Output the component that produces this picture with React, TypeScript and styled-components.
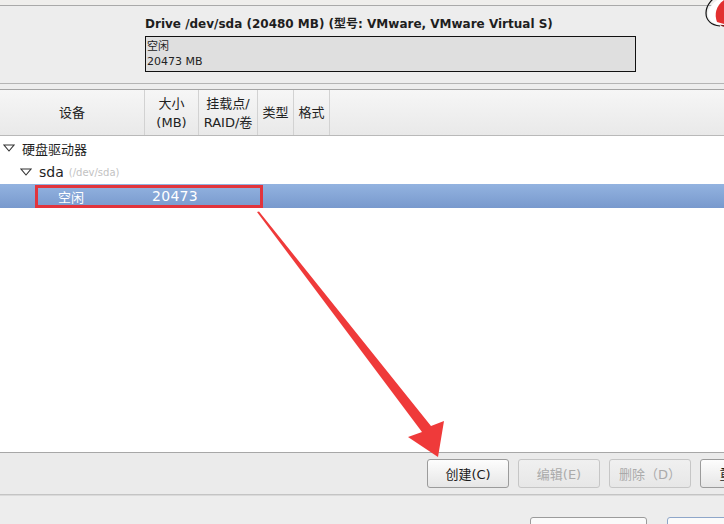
import styled, { createGlobalStyle } from "styled-components";

const Global = createGlobalStyle`
  html, body {
    margin: 0;
    padding: 0;
    background: #ededed;
    overflow: hidden;
  }
  body {
    font-family: "DejaVu Sans", "Noto Sans CJK SC", sans-serif;
    color: #1a1a1a;
  }
`;

/* ── Frame ───────────────────────────────────────────────────── */

const Page = styled.div`
  position: relative;
  width: 724px;
  height: 524px;
  display: flex;
  flex-direction: column;
  background: #ededed;
  overflow: hidden;
`;

const TopStrip = styled.div`
  height: 5px;
  background: #efeeec;
  border-bottom: 1px solid #a9a9a9;
  flex: none;
`;

const DriveSection = styled.section`
  flex: none;
  height: 78px;
  padding: 11px 0 0 145px;
  box-sizing: border-box;
  border-bottom: 1px solid #b4b4b4;
  display: flex;
  flex-direction: column;
  gap: 4px;
`;

const DriveTitle = styled.div`
  font-size: 12px;
  font-weight: 700;
  line-height: 15px;
  color: #1e1e1e;
`;

const DriveBar = styled.div`
  width: 491px;
  height: 36px;
  box-sizing: border-box;
  border: 1px solid #111;
  background: #dfdfdf;
  padding: 2px 1px 0;
  font-size: 11px;
  line-height: 15px;
  color: #222;
`;

const Spacer = styled.div`
  flex: none;
  height: 5px;
  border-bottom: 1px solid #a4a4a4;
`;

/* ── Tree view ───────────────────────────────────────────────── */

const Tree = styled.div`
  position: relative;
  flex: 1;
  min-height: 0;
  background: #fff;
  display: flex;
  flex-direction: column;
`;

const HeaderRow = styled.div`
  display: flex;
  height: 46px;
  box-sizing: border-box;
  flex: none;
  background: linear-gradient(#f6f6f6, #e9e9e9);
  border-bottom: 1px solid #b9b9b9;
`;

const HeaderCell = styled.div<{ $w?: number }>`
  ${(p) => (p.$w ? `width: ${p.$w}px; flex: none;` : "flex: 1;")}
  box-sizing: border-box;
  border-right: ${(p) => (p.$w ? "1px solid #d2d2d2" : "none")};
  display: flex;
  align-items: center;
  justify-content: center;
  text-align: center;
  font-size: 13px;
  line-height: 19px;
  color: #222;
`;

const Row = styled.div<{ $selected?: boolean }>`
  position: relative;
  height: 24px;
  display: flex;
  align-items: center;
  font-size: 13px;
  color: ${(p) => (p.$selected ? "#fff" : "#1e1e1e")};
  background: ${(p) =>
    p.$selected ? "linear-gradient(#93b3e0, #7899cd)" : "transparent"};
`;

const Expander = styled.span<{ $indent: number }>`
  width: 14px;
  margin-left: ${(p) => p.$indent}px;
  margin-right: 6px;
  display: inline-flex;
  align-items: center;
  justify-content: center;
`;

const DevLabel = styled.span`
  font-size: 14px;
`;

const DevPath = styled.span`
  margin-left: 5px;
  font-size: 10px;
  color: #c2c2c2;
`;

const Cell = styled.span<{ $w: number; $pad?: number }>`
  width: ${(p) => p.$w}px;
  padding-left: ${(p) => p.$pad ?? 0}px;
  box-sizing: border-box;
  flex: none;
`;

const SizeText = styled.span`
  font-size: 14px;
  letter-spacing: 0.3px;
`;

const Highlight = styled.div`
  position: absolute;
  left: 35px;
  top: 1px;
  width: 228px;
  height: 23px;
  box-sizing: border-box;
  border: 3px solid #e2343c;
`;

/* ── Buttons ─────────────────────────────────────────────────── */

const ButtonBar = styled.div`
  flex: none;
  height: 43px;
  box-sizing: border-box;
  border-top: 1px solid #a7a7a7;
  border-bottom: 1px solid #c4c4c4;
  background: #ebebeb;
  display: flex;
  justify-content: flex-end;
  align-items: flex-start;
  gap: 9px;
  padding: 6px 0 0;
  margin-right: -58px;
`;

const Button = styled.button<{ $disabled?: boolean; $focus?: boolean }>`
  width: 82px;
  height: 29px;
  flex: none;
  border-radius: 3px;
  border: 1px solid
    ${(p) => (p.$focus ? "#8ea6c9" : p.$disabled ? "#c6c6c6" : "#9b9b9b")};
  background: ${(p) =>
    p.$disabled
      ? "linear-gradient(#f0f0f0, #e7e7e7)"
      : "linear-gradient(#fdfdfd, #e6e6e6)"};
  color: ${(p) => (p.$disabled ? "#aaaaaa" : "#1a1a1a")};
  font-family: "DejaVu Sans", "Noto Sans CJK SC", sans-serif;
  font-size: 13px;
  padding: 0;
  cursor: default;
`;

const Footer = styled.div`
  flex: none;
  height: 29px;
  box-sizing: border-box;
  border-top: 1px solid #dadada;
  background: #ededed;
  display: flex;
  justify-content: flex-end;
  align-items: flex-start;
  gap: 20px;
  padding-top: 21px;
  margin-right: -60px;
`;

const FooterButton = styled(Button)`
  width: 117px;
  height: 30px;
  background: #fafafa;
`;

/* ── Overlays (annotation + logo) ────────────────────────────── */

const Overlay = styled.svg`
  position: absolute;
  left: 0;
  top: 0;
  pointer-events: none;
`;

const Logo = styled.svg`
  position: absolute;
  right: 0;
  top: 0;
`;

function Triangle() {
  return (
    <svg width="12" height="8" viewBox="0 0 12 8">
      <path d="M1 1 H11 L6 7 Z" fill="none" stroke="#333" strokeWidth="1.1" />
    </svg>
  );
}

export default function App() {
  return (
    <>
      <Global />
      <Page>
        <TopStrip />
        <DriveSection>
          <DriveTitle>Drive /dev/sda (20480 MB) (型号: VMware, VMware Virtual S)</DriveTitle>
          <DriveBar>
            空闲
            <br />
            20473 MB
          </DriveBar>
        </DriveSection>
        <Spacer />
        <Tree>
          <HeaderRow>
            <HeaderCell $w={145}>设备</HeaderCell>
            <HeaderCell $w={54}>
              大小
              <br />
              (MB)
            </HeaderCell>
            <HeaderCell $w={59}>
              挂载点/
              <br />
              RAID/卷
            </HeaderCell>
            <HeaderCell $w={36}>类型</HeaderCell>
            <HeaderCell $w={36}>格式</HeaderCell>
            <HeaderCell />
          </HeaderRow>

          <Row>
            <Expander $indent={2}>
              <Triangle />
            </Expander>
            <span>硬盘驱动器</span>
          </Row>
          <Row>
            <Expander $indent={19}>
              <Triangle />
            </Expander>
            <DevLabel>sda</DevLabel>
            <DevPath>(/dev/sda)</DevPath>
          </Row>
          <Row $selected>
            <Cell $w={145} $pad={58}>空闲</Cell>
            <Cell $w={120} $pad={7}>
              <SizeText>20473</SizeText>
            </Cell>
            <Highlight />
          </Row>
        </Tree>

        <ButtonBar>
          <Button>创建(C)</Button>
          <Button $disabled>编辑(E)</Button>
          <Button $disabled>删除（D）</Button>
          <Button>重设(s)</Button>
        </ButtonBar>

        <Footer>
          <FooterButton>返回(B)</FooterButton>
          <FooterButton $focus>下一步(N)</FooterButton>
        </Footer>

        <Overlay width="724" height="524" viewBox="0 0 724 524">
          <polygon
            points="257,212 259,211.5 431,426 444,421 438,457 408,437 422,432"
            fill="#ef3a3a"
          />
        </Overlay>

        <Logo width="20" height="32" viewBox="0 0 20 32">
          <ellipse cx="22" cy="24" rx="6" ry="3" fill="#7a1a1a" />
          <path d="M28 -4 C 14 -4 4 6 4 14 C 4 20 9 25 20 25 L 20 -4 Z" fill="#fff" />
          <path d="M20 0 C 12 6 10 14 13 22 L 20 24 Z" fill="#e23030" />
          <path
            d="M20 -6 C 8 -4 2 6 2 13 C 2 20 7 25 16 26"
            fill="none"
            stroke="#111"
            strokeWidth="1.2"
          />
        </Logo>
      </Page>
    </>
  );
}
